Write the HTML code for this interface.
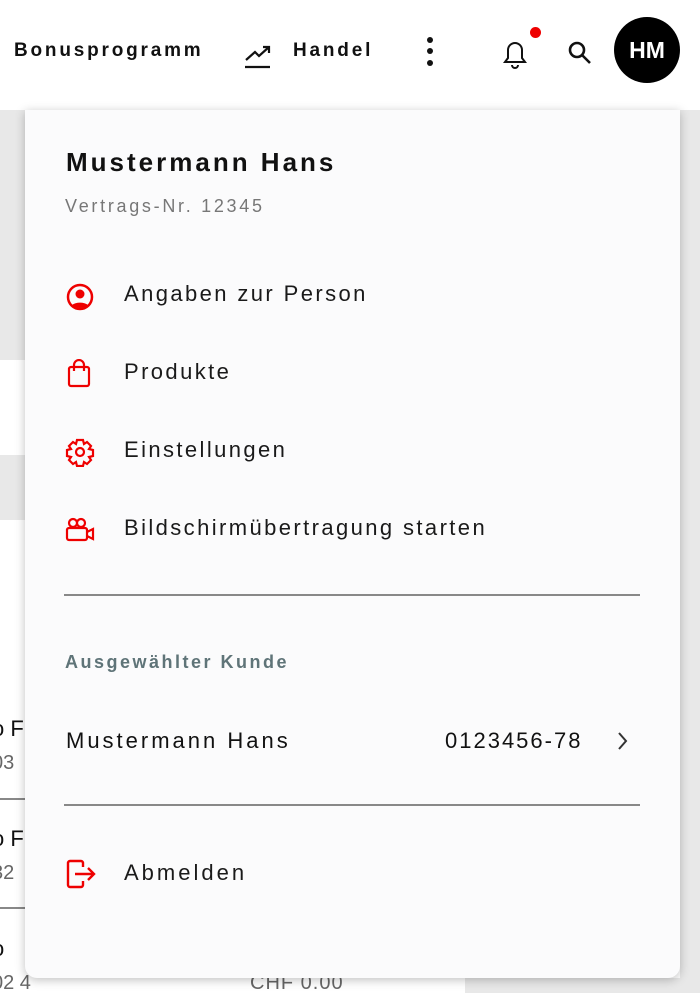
<!DOCTYPE html>
<html><head><style>
*{margin:0;padding:0;box-sizing:border-box}
body{width:700px;height:993px;overflow:hidden;background:#fff;font-family:"Liberation Sans",sans-serif;color:#111;position:relative}
.abs{position:absolute}
.nav{font-weight:bold;font-size:19px;top:40px;letter-spacing:2.8px}
.panel{left:25px;top:110px;width:655px;height:868px;background:#fbfbfc;border-radius:0 0 12px 12px;box-shadow:0 2px 10px rgba(0,0,0,.25)}
.item{position:absolute;left:99px;font-size:22px;color:#1a1a1a;letter-spacing:2.4px}
.ic{position:absolute;left:40px}
.hr{position:absolute;left:39px;width:576px;height:2px;background:#888}
</style></head><body>
<div class="abs" style="left:0;top:110px;width:25px;height:250px;background:#e8e8e8"></div>
<div class="abs" style="left:0;top:455px;width:25px;height:65px;background:#e8e8e8"></div>
<div class="abs" style="left:680px;top:110px;width:20px;height:883px;background:#e8e8e8"></div>
<div class="abs" style="left:465px;top:978px;width:235px;height:15px;background:#e8e8e8"></div>
<div class="abs" style="left:0;top:798px;width:25px;height:2px;background:#888"></div>
<div class="abs" style="left:0;top:907px;width:25px;height:2px;background:#888"></div>
<div class="abs" style="left:-8px;top:716px;font-size:22px">o F</div>
<div class="abs" style="left:-8px;top:752px;font-size:20px;color:#666">03</div>
<div class="abs" style="left:-8px;top:826px;font-size:22px">o F</div>
<div class="abs" style="left:-8px;top:862px;font-size:20px;color:#666">32</div>
<div class="abs" style="left:-8px;top:936px;font-size:22px">o</div>
<div class="abs" style="left:-8px;top:972px;font-size:20px;color:#666">02 4</div>
<div class="abs" style="left:250px;top:972px;font-size:20px;color:#666;letter-spacing:1px">CHF 0.00</div>

<div class="abs nav" style="left:14px">Bonusprogramm</div>
<svg class="abs" style="left:243px;top:38px" width="32" height="32" viewBox="0 0 32 32" fill="none" stroke="#111" stroke-width="2.2"><path d="M3 22l9-8 4 4 10-9M20 9h6v6M2 29h25"/></svg>
<div class="abs nav" style="left:293px">Handel</div>
<svg class="abs" style="left:422px;top:34px" width="16" height="36"><circle cx="8" cy="6" r="3" fill="#111"/><circle cx="8" cy="17" r="3" fill="#111"/><circle cx="8" cy="29" r="3" fill="#111"/></svg>
<svg class="abs" style="left:500px;top:36px" width="32" height="34" viewBox="0 0 32 34" fill="none" stroke="#111" stroke-width="2"><path d="M5 26h20l-3-4v-8a7 7 0 0 0-14 0v8z"/><path d="M12 29a3 3 0 0 0 6 0"/></svg>
<div class="abs" style="left:530px;top:27px;width:11px;height:11px;border-radius:50%;background:#e00"></div>
<svg class="abs" style="left:565px;top:38px" width="30" height="30" viewBox="0 0 30 30" fill="none" stroke="#111" stroke-width="2.6"><circle cx="12" cy="12" r="7"/><path d="M17 17l8 8"/></svg>
<div class="abs" style="left:614px;top:17px;width:66px;height:66px;border-radius:50%;background:#000;color:#fff;font-weight:bold;font-size:23px;text-align:center;line-height:66px">HM</div>

<div class="abs panel">
 <div class="abs" style="left:41px;top:37px;font-size:26px;font-weight:bold;letter-spacing:3px">Mustermann Hans</div>
 <div class="abs" style="left:40px;top:86px;font-size:18px;color:#777;letter-spacing:2.7px">Vertrags-Nr. 12345</div>

 <svg class="ic" style="top:172px" width="30" height="30" viewBox="0 0 30 30"><circle cx="15" cy="15" r="12" fill="none" stroke="#e00" stroke-width="2.5"/><circle cx="15" cy="12" r="4.5" fill="#e00"/><path d="M7 23a10 6 0 0 1 16 0a12 12 0 0 1-16 0z" fill="#e00"/></svg>
 <div class="item" style="top:171px">Angaben zur Person</div>

 <svg class="ic" style="top:249px" width="30" height="30" viewBox="0 0 30 30" fill="none" stroke="#e00" stroke-width="2.2"><rect x="4" y="8" width="20" height="19" rx="2"/><path d="M9 12V6a5 5 0 0 1 10 0v6"/></svg>
 <div class="item" style="top:249px">Produkte</div>

 <svg class="ic" style="top:327px" width="30" height="30" viewBox="0 0 30 30" fill="none" stroke="#e00" stroke-width="2.2"><path d="M12 3h6l1 4 3-2 4 4-2 3 4 1v6l-4 1 2 3-4 4-3-2-1 4h-6l-1-4-3 2-4-4 2-3-4-1v-6l4-1-2-3 4-4 3 2z"/><circle cx="15" cy="15" r="4"/></svg>
 <div class="item" style="top:327px">Einstellungen</div>

 <svg class="ic" style="top:405px" width="32" height="30" viewBox="0 0 32 30" fill="none" stroke="#e00" stroke-width="2.2"><circle cx="8" cy="8" r="4"/><circle cx="16" cy="8" r="4"/><rect x="2" y="13" width="20" height="12" rx="2"/><path d="M22 17l6-3v10l-6-3"/></svg>
 <div class="item" style="top:405px">Bildschirmübertragung starten</div>

 <div class="hr" style="top:484px"></div>
 <div class="abs" style="left:40px;top:542px;font-size:18px;color:#5f7478;font-weight:bold;letter-spacing:2.5px">Ausgewählter Kunde</div>
 <div class="abs" style="left:41px;top:618px;font-size:22px;letter-spacing:3px">Mustermann Hans</div>
 <div class="abs" style="left:420px;top:618px;font-size:22px;letter-spacing:2px">0123456-78</div>
 <svg class="abs" style="left:589px;top:619px" width="16" height="24" viewBox="0 0 16 24" fill="none" stroke="#333" stroke-width="2"><path d="M5 4l7 8-7 8"/></svg>
 <div class="hr" style="top:694px"></div>

 <svg class="ic" style="top:748px" width="32" height="32" viewBox="0 0 32 32" fill="none" stroke="#e00" stroke-width="2.4"><path d="M18 9V5a2 2 0 0 0-2-2H5a2 2 0 0 0-2 2v22a2 2 0 0 0 2 2h11a2 2 0 0 0 2-2v-4"/><path d="M10 16h18M23 10l6 6-6 6"/></svg>
 <div class="item" style="top:750px;letter-spacing:3px">Abmelden</div>
</div>
</body></html>
